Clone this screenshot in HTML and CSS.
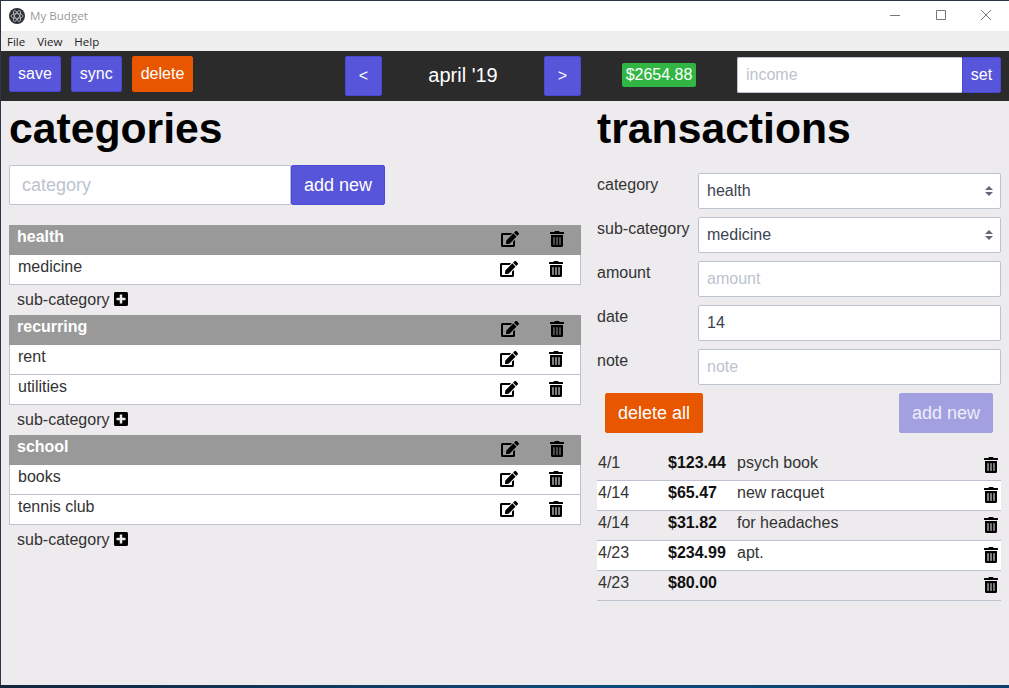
FILE: index.html
```html
<!DOCTYPE html>
<html lang="en">
<head>
    <meta charset="UTF-8" />
    <meta name="viewport" content="width=device-width, initial-scale=1.0" />
    <title>My Budget</title>
    <link rel="stylesheet" href="styles.css">
</head>
<body>
    <svg class="icon-defs" aria-hidden="true">
        <symbol id="i-edit" viewBox="0 0 576 512"><path d="M402.6 83.2l90.2 90.2c3.8 3.8 3.8 10 0 13.8L274.4 405.6l-92.8 10.3c-12.4 1.4-22.9-9.1-21.5-21.5l10.3-92.8L388.8 83.2c3.8-3.8 10-3.8 13.8 0zm162-22.9l-48.8-48.8c-15.2-15.2-39.9-15.2-55.2 0l-35.4 35.4c-3.8 3.8-3.8 10 0 13.8l90.2 90.2c3.8 3.8 10 3.8 13.8 0l35.4-35.4c15.2-15.3 15.2-40 0-55.2zM384 346.2V448H64V128h229.8c3.2 0 6.2-1.3 8.5-3.5l40-40c7.6-7.6 2.2-20.5-8.5-20.5H48C21.5 64 0 85.5 0 112v352c0 26.5 21.5 48 48 48h352c26.5 0 48-21.5 48-48V306.2c0-10.7-12.9-16-20.5-8.5l-40 40c-2.2 2.3-3.5 5.3-3.5 8.5z"/></symbol>
        <symbol id="i-trash" viewBox="0 0 448 512"><path d="M32 464a48 48 0 0 0 48 48h288a48 48 0 0 0 48-48V128H32zm272-256a16 16 0 0 1 32 0v224a16 16 0 0 1-32 0zm-96 0a16 16 0 0 1 32 0v224a16 16 0 0 1-32 0zm-96 0a16 16 0 0 1 32 0v224a16 16 0 0 1-32 0zM432 32H312l-9.4-18.7A24 24 0 0 0 281.1 0H166.8a23.72 23.72 0 0 0-21.4 13.3L136 32H16A16 16 0 0 0 0 48v32a16 16 0 0 0 16 16h416a16 16 0 0 0 16-16V48a16 16 0 0 0-16-16z"/></symbol>
        <symbol id="i-plus" viewBox="0 0 448 512"><path d="M400 32H48C21.5 32 0 53.5 0 80v352c0 26.5 21.5 48 48 48h352c26.5 0 48-21.5 48-48V80c0-26.5-21.5-48-48-48zm-32 252c0 6.6-5.4 12-12 12h-92v92c0 6.6-5.4 12-12 12h-56c-6.6 0-12-5.4-12-12v-92H92c-6.6 0-12-5.4-12-12v-56c0-6.6 5.4-12 12-12h92v-92c0-6.6 5.4-12 12-12h56c6.6 0 12 5.4 12 12v92h92c6.6 0 12 5.4 12 12v56z"/></symbol>
    </svg>

    <div class="window">
        <div class="titlebar">
            <svg class="app-logo" viewBox="0 0 16 16">
                <circle cx="8" cy="8" r="8" fill="#2f3136"/>
                <g fill="none" stroke="#b9c4c9" stroke-width="0.8">
                    <ellipse cx="8" cy="8" rx="6" ry="2.4"/>
                    <ellipse cx="8" cy="8" rx="6" ry="2.4" transform="rotate(60 8 8)"/>
                    <ellipse cx="8" cy="8" rx="6" ry="2.4" transform="rotate(120 8 8)"/>
                </g>
            </svg>
            <span class="app-title">My Budget</span>
            <div class="window-controls">
                <svg viewBox="0 0 10 10"><path d="M0 5.5H10" stroke="#777" fill="none"/></svg>
                <svg viewBox="0 0 10 10"><path d="M.5 .5H9.500V9.500H.5Z" stroke="#777" fill="none"/></svg>
                <svg viewBox="0 0 10 10"><path d="M0 0L10 10M10 0L0 10" stroke="#777" fill="none"/></svg>
            </div>
        </div>
        <div class="menubar">
            <span>File</span>
            <span>View</span>
            <span>Help</span>
        </div>

        <header class="toolbar">
            <div class="toolbar-actions">
                <button class="btn btn-primary">save</button>
                <button class="btn btn-primary">sync</button>
                <button class="btn btn-danger">delete</button>
            </div>
            <div class="month-nav">
                <button class="btn btn-primary btn-nav">&lt;</button>
                <div class="month-label">april '19</div>
                <button class="btn btn-primary btn-nav">&gt;</button>
            </div>
            <div class="balance">$2654.88</div>
            <div class="income-group">
                <input type="text" class="field" placeholder="income" />
                <button class="btn btn-primary">set</button>
            </div>
        </header>

        <main class="content">
            <section class="categories">
                <h1>categories</h1>
                <div class="new-category">
                    <input type="text" class="field" placeholder="category" />
                    <button class="btn btn-primary">add new</button>
                </div>

                <div class="cat-group">
                    <div class="cat-row cat-head">
                        <span class="cat-name">health</span>
                        <svg class="ic ic-edit"><use href="#i-edit"/></svg>
                        <svg class="ic ic-trash"><use href="#i-trash"/></svg>
                    </div>
                    <div class="cat-row sub-row">
                        <span class="cat-name">medicine</span>
                        <svg class="ic ic-edit"><use href="#i-edit"/></svg>
                        <svg class="ic ic-trash"><use href="#i-trash"/></svg>
                    </div>
                    <div class="add-sub">sub-category <svg class="ic ic-plus"><use href="#i-plus"/></svg></div>
                </div>

                <div class="cat-group">
                    <div class="cat-row cat-head">
                        <span class="cat-name">recurring</span>
                        <svg class="ic ic-edit"><use href="#i-edit"/></svg>
                        <svg class="ic ic-trash"><use href="#i-trash"/></svg>
                    </div>
                    <div class="cat-row sub-row">
                        <span class="cat-name">rent</span>
                        <svg class="ic ic-edit"><use href="#i-edit"/></svg>
                        <svg class="ic ic-trash"><use href="#i-trash"/></svg>
                    </div>
                    <div class="cat-row sub-row">
                        <span class="cat-name">utilities</span>
                        <svg class="ic ic-edit"><use href="#i-edit"/></svg>
                        <svg class="ic ic-trash"><use href="#i-trash"/></svg>
                    </div>
                    <div class="add-sub">sub-category <svg class="ic ic-plus"><use href="#i-plus"/></svg></div>
                </div>

                <div class="cat-group">
                    <div class="cat-row cat-head">
                        <span class="cat-name">school</span>
                        <svg class="ic ic-edit"><use href="#i-edit"/></svg>
                        <svg class="ic ic-trash"><use href="#i-trash"/></svg>
                    </div>
                    <div class="cat-row sub-row">
                        <span class="cat-name">books</span>
                        <svg class="ic ic-edit"><use href="#i-edit"/></svg>
                        <svg class="ic ic-trash"><use href="#i-trash"/></svg>
                    </div>
                    <div class="cat-row sub-row">
                        <span class="cat-name">tennis club</span>
                        <svg class="ic ic-edit"><use href="#i-edit"/></svg>
                        <svg class="ic ic-trash"><use href="#i-trash"/></svg>
                    </div>
                    <div class="add-sub">sub-category <svg class="ic ic-plus"><use href="#i-plus"/></svg></div>
                </div>
            </section>

            <section class="transactions">
                <h1>transactions</h1>
                <form class="tx-form">
                    <label>category</label>
                    <div class="select-wrap">
                        <select class="field"><option>health</option></select>
                    </div>
                    <label>sub-category</label>
                    <div class="select-wrap">
                        <select class="field"><option>medicine</option></select>
                    </div>
                    <label>amount</label>
                    <input type="text" class="field" placeholder="amount" />
                    <label>date</label>
                    <input type="text" class="field" value="14" />
                    <label>note</label>
                    <input type="text" class="field" placeholder="note" />
                </form>
                <div class="tx-actions">
                    <button class="btn btn-danger">delete all</button>
                    <button class="btn btn-disabled">add new</button>
                </div>
                <div class="tx-list">
                    <div class="tx-row">
                        <span class="tx-date">4/1</span><b class="tx-amount">$123.44</b><span class="tx-note">psych book</span>
                        <svg class="ic ic-trash"><use href="#i-trash"/></svg>
                    </div>
                    <div class="tx-row">
                        <span class="tx-date">4/14</span><b class="tx-amount">$65.47</b><span class="tx-note">new racquet</span>
                        <svg class="ic ic-trash"><use href="#i-trash"/></svg>
                    </div>
                    <div class="tx-row">
                        <span class="tx-date">4/14</span><b class="tx-amount">$31.82</b><span class="tx-note">for headaches</span>
                        <svg class="ic ic-trash"><use href="#i-trash"/></svg>
                    </div>
                    <div class="tx-row">
                        <span class="tx-date">4/23</span><b class="tx-amount">$234.99</b><span class="tx-note">apt.</span>
                        <svg class="ic ic-trash"><use href="#i-trash"/></svg>
                    </div>
                    <div class="tx-row">
                        <span class="tx-date">4/23</span><b class="tx-amount">$80.00</b><span class="tx-note"></span>
                        <svg class="ic ic-trash"><use href="#i-trash"/></svg>
                    </div>
                </div>
            </section>
        </main>
        <div class="taskbar-strip"></div>
    </div>
</body>
</html>
```

FILE: styles.css
```css
* {
    box-sizing: border-box;
}
html, body {
    margin: 0;
    height: 100%;
    overflow: hidden;
}
body {
    font-family: "Liberation Sans", Arial, sans-serif;
    font-size: 16px;
    color: #222;
    background: #edebed;
}
.icon-defs {
    display: none;
}
.window {
    height: 688px;
    display: flex;
    flex-direction: column;
    border-top: 1px solid #2c3548;
    border-left: 1px solid #2c3548;
}

/* title bar */
.titlebar {
    height: 30px;
    flex: none;
    background: #fff;
    display: flex;
    align-items: center;
    padding-left: 8px;
}
.app-logo {
    width: 16px;
    height: 16px;
}
.app-title {
    margin: -1px 0 0 5px;
    font-family: "Open Sans", sans-serif;
    font-size: 11.600px;
    color: #9a9a9a;
}
.window-controls {
    margin-left: auto;
    display: flex;
    gap: 35.500px;
    padding-right: 18px;
    margin-top: -3px;
}
.window-controls svg {
    width: 10px;
    height: 10px;
    display: block;
}
.menubar {
    height: 20px;
    flex: none;
    background: #eeeeee;
    display: flex;
    align-items: center;
    gap: 12px;
    padding-left: 6px;
    font-family: "Open Sans", sans-serif;
    font-size: 11.500px;
    color: #222;
}

/* top bar */
.toolbar {
    height: 50px;
    flex: none;
    background: #2b2b2b;
    display: flex;
    align-items: flex-start;
    padding: 5px 8px 0;
}
.btn {
    border: 1px solid transparent;
    border-radius: 2px;
    color: #fff;
    font-family: inherit;
    font-size: 16px;
    padding: 0 8px;
    cursor: pointer;
}
.btn-primary {
    background: #5755d9;
    border-color: #4b48d6;
}
.btn-danger {
    background: #e85600;
    border-color: #e85600;
}
.btn-disabled {
    background: #a3a0e2;
    border-color: #a3a0e2;
    color: #eeeef8;
}
.toolbar-actions {
    display: flex;
    gap: 10px;
    width: 336px;
}
.toolbar-actions .btn {
    height: 36px;
}
.month-nav {
    display: flex;
    width: 236px;
}
.btn-nav {
    width: 37px;
    height: 40px;
    padding: 0;
    font-size: 16px;
}
.month-label {
    flex: 1;
    text-align: center;
    color: #fff;
    font-size: 20px;
    line-height: 38px;
}
.balance {
    margin: 7px 0 0 41px;
    height: 24px;
    width: 74px;
    line-height: 24px;
    text-align: center;
    background: #32b643;
    border-radius: 2px;
    color: #fff;
    font-size: 16px;
}
.income-group {
    display: flex;
    margin: 1px 0 0 41px;
    width: 264px;
}
.income-group .field {
    flex: 1;
    min-width: 0;
    height: 36px;
    border-radius: 2px 0 0 2px;
    border-right: 0;
}
.income-group .btn {
    height: 36px;
    padding: 0;
    width: 39px;
}

/* inputs */
.field {
    font-family: inherit;
    font-size: 16px;
    color: #3b4351;
    background: #fff;
    border: 1px solid #bcc3ce;
    border-radius: 2px;
    padding: 0 8px;
    height: 36px;
    width: 100%;
    outline: none;
}
.field::placeholder {
    color: #bcc3ce;
}

/* columns */
.content {
    flex: 1;
    display: flex;
    padding: 0 8px;
    gap: 16px;
    min-height: 0;
}
h1 {
    margin: 0;
    font-size: 42.700px;
    font-weight: 700;
    line-height: 55px;
    color: #000;
}
.categories {
    width: 572px;
}
.transactions {
    width: 404px;
}
.new-category {
    display: flex;
    margin: 9px 0 20px;
}
.new-category .field {
    width: 282px;
    height: 40px;
    font-size: 18px;
    padding: 0 12px;
    border-radius: 2px 0 0 2px;
}
.new-category .btn {
    width: 94px;
    height: 40px;
    font-size: 18px;
    padding: 0;
}
.cat-row {
    height: 30px;
    display: flex;
    align-items: flex-start;
    line-height: 23px;
}
.cat-name {
    flex: 1;
}
.cat-head {
    background: #999999;
    padding-left: 8px;
    color: #fff;
    font-weight: 700;
}
.sub-row {
    background: #fff;
    border-left: 1px solid #bcc3ce;
    border-right: 1px solid #bcc3ce;
    border-bottom: 1px solid #bcc3ce;
    padding-left: 8px;
    color: #333;
}
.ic {
    height: 16px;
    fill: #000;
    flex: none;
}
.ic-edit {
    width: 18px;
}
.ic-trash {
    width: 14px;
}
.cat-row .ic-edit {
    margin-top: 6px;
}
.cat-row .ic-trash {
    margin: 6px 17px 0 31px;
}
.add-sub {
    height: 30px;
    padding-left: 8px;
    line-height: 30px;
    color: #333;
}
.ic-plus {
    width: 14px;
    height: 16px;
    vertical-align: -2px;
}

/* transaction form */
.tx-form {
    display: grid;
    grid-template-columns: 101px 303px;
    row-gap: 8px;
    margin-top: 17px;
}
.tx-form label {
    line-height: 23px;
    color: #333;
    white-space: nowrap;
}
.select-wrap {
    position: relative;
}
.select-wrap select {
    appearance: none;
    -webkit-appearance: none;
    padding-bottom: 2px;
}
.select-wrap::before, .select-wrap::after {
    content: "";
    position: absolute;
    right: 8px;
    border-left: 4px solid transparent;
    border-right: 4px solid transparent;
    pointer-events: none;
}
.select-wrap::before {
    top: 13px;
    border-bottom: 4px solid #667;
}
.select-wrap::after {
    top: 19px;
    border-top: 4px solid #667;
}
.tx-actions {
    display: flex;
    justify-content: space-between;
    margin-top: 8px;
    padding: 0 8px;
}
.tx-actions .btn {
    height: 40px;
    font-size: 18px;
    padding: 0 12px;
}
.tx-list {
    margin-top: 18px;
}
.tx-row {
    height: 30px;
    display: flex;
    align-items: flex-start;
    line-height: 23px;
    border-bottom: 1px solid #bcc3ce;
    color: #333;
    padding-left: 1px;
}
.tx-row:nth-child(even) {
    background: #fff;
}
.tx-date {
    width: 70px;
}
.tx-amount {
    width: 69px;
    color: #111;
}
.tx-note {
    flex: 1;
}
.tx-row .ic-trash {
    margin: 6px 3px 0 0;
}
.taskbar-strip {
    height: 3px;
    flex: none;
    margin-left: -1px;
    background: linear-gradient(90deg, #12263d, #0d4a7c 60%, #0d3f6c);
}
```
